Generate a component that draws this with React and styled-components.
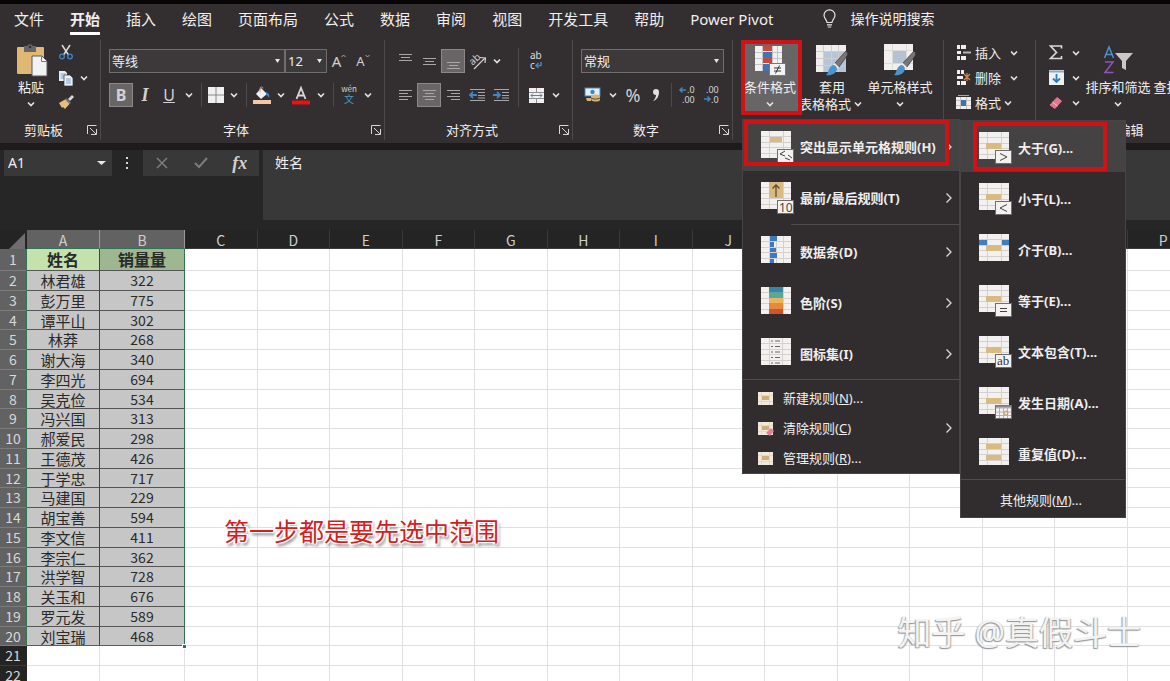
import React from 'react'
import styled, { createGlobalStyle, css } from 'styled-components'

const colors = {
    ribbon: '#332f30',
    menu: '#312d2e',
    menuHover: '#444243',
    bar: '#262626',
    field: '#383838',
    line: '#4c494a',
    text: '#f0eeee',
    icon: '#d2d0d0',
    blue: '#3f86c4',
    tan: '#d9ba80',
    red: '#cf1216',
    green: '#2e7554',
    headActive: '#626262',
}

const uiFont = '"Noto Sans", "Noto Sans CJK SC", sans-serif'

const GlobalStyle = createGlobalStyle`
    * { box-sizing: border-box; }
    body { margin: 0; background: #fff; font-family: ${uiFont}; }
    button, input, select { font: inherit; color: inherit; }
    svg { overflow: visible; }
`

/* ---------- layout ---------- */

const StPage = styled.div`
    display: flex;
    flex-direction: column;
    height: 100vh;
    overflow: hidden;
    color: ${colors.text};
    font-size: 13px;
    line-height: 18px;
`

const StTitleStrip = styled.div`
    flex: none;
    height: 4px;
    background: #060404;
`

const StTabs = styled.nav`
    display: flex;
    flex: none;
    align-items: center;
    gap: 26px;
    height: 32px;
    padding: 0 14px;
    background: ${colors.ribbon};
    white-space: nowrap;
`

const StTab = styled.button`
    display: flex;
    align-items: center;
    height: 30px;
    padding: 0;
    border: 0;
    border-bottom: 3px solid ${({ $active }) => ($active ? '#fff' : 'transparent')};
    background: none;
    font-size: 15px;
    font-weight: ${({ $active }) => ($active ? 700 : 400)};
`

const StSearch = styled(StTab)`
    gap: 14px;
    margin-left: 24px;
    font-size: 14px;
`

const StRibbon = styled.div`
    display: flex;
    flex: none;
    height: 107px;
    padding: 4px 0 3px;
    background: ${colors.ribbon};
`

const StGroup = styled.section`
    display: flex;
    flex: none;
    flex-direction: column;
    justify-content: space-between;
    border-right: 1px solid ${colors.line};
`

const StGroupBody = styled.div`
    display: flex;
    gap: ${({ $gap }) => $gap || 0}px;
    height: 75px;
    padding: 0 8px;
`

const StGroupFoot = styled.div`
    display: flex;
    align-items: center;
    height: 20px;
    padding-right: 3px;
    text-align: center;
`

const StGroupName = styled.span`
    flex: 1;
`

const StLauncher = styled.button`
    display: flex;
    padding: 0;
    border: 0;
    background: none;
`

const StRows = styled.div`
    display: flex;
    flex-direction: column;
    gap: 10px;
    padding-top: 9px;
`

const StStack = styled.div`
    display: grid;
    grid-template-rows: repeat(3, 25px);
    justify-items: start;
`

const StRow = styled.div`
    display: flex;
    align-items: center;
`

const StTool = styled.button`
    display: flex;
    align-items: center;
    justify-content: center;
    width: ${({ $w }) => $w || 24}px;
    height: 24px;
    padding: 0;
    border: 1px solid ${({ $active }) => ($active ? '#8a8888' : 'transparent')};
    background: ${({ $active }) => ($active ? '#686566' : 'none')};
    color: ${colors.icon};
    font-size: ${({ $size }) => $size || 16}px;
    font-weight: ${({ $bold }) => ($bold ? 700 : 400)};
`

const StSerifTool = styled(StTool)`
    font-family: "Liberation Serif", serif;
    font-size: 18px;
    font-style: italic;
    font-weight: 700;
`

const StDivider = styled.span`
    align-self: stretch;
    width: 1px;
    margin: ${({ $tall }) => ($tall ? '8px 4px' : '0 4px')};
    background: ${colors.line};
`

const StWideTool = styled.button`
    display: flex;
    align-items: center;
    padding: 0;
    border: 0;
    background: none;
    white-space: nowrap;
`

const StWideIcon = styled.span`
    display: flex;
    justify-content: center;
    width: 22px;
    margin-right: 1px;
`

const StBigTool = styled.button`
    display: flex;
    flex-direction: column;
    align-items: center;
    width: ${({ $w }) => $w}px;
    height: 75px;
    padding: 4px 0 0;
    border: 0;
    background: ${({ $active }) => ($active ? '#686566' : 'none')};
    white-space: nowrap;

    svg { flex: none; }
`

const StBigLabel = styled.span`
    margin-top: 2px;
`

const StLabelLine = styled.span`
    display: flex;
    align-items: center;
    height: 15px;
`

const redFrame = css`
    &::after {
        content: '';
        position: absolute;
        inset: ${({ $frame }) => $frame};
        border: 4px solid ${colors.red};
        pointer-events: none;
    }
`

const StAnchor = styled.div`
    position: relative;
    z-index: 2;
    ${redFrame}
`

const StSelectWrap = styled.label`
    position: relative;
    display: flex;
    width: ${({ $w }) => $w}px;

    svg {
        position: absolute;
        right: 5px;
        top: 10px;
        pointer-events: none;
    }
`

const StSelect = styled.select`
    appearance: none;
    width: 100%;
    height: 24px;
    padding: 0 2px;
    border: 1px solid #706e6e;
    border-radius: 0;
    background: #3b3939;
    font-size: 13px;
`

/* ---------- menus ---------- */

const StMenu = styled.div`
    position: absolute;
    left: 1px;
    top: 79px;
    width: 218px;
    border: 1px solid #474445;
    background: ${colors.menu};
`

const StSubMenu = styled(StMenu)`
    left: 217px;
    top: 0;
    width: 166px;
`

const StMenuItem = styled.button`
    position: relative;
    display: flex;
    align-items: center;
    gap: 5px;
    width: 100%;
    height: 51px;
    padding: 3px 6px 0 18px;
    border: 0;
    background: ${({ $active }) => ($active ? colors.menuHover : 'none')};
    font-weight: 700;
    text-align: left;
    white-space: nowrap;
    ${({ $frame }) => $frame && redFrame}
`

const StSmallItem = styled(StMenuItem)`
    gap: 9px;
    height: 30px;
    padding: 0 6px 0 14px;
    font-weight: 400;
`

const StOtherItem = styled(StSmallItem)`
    height: 34px;
    padding-left: 39px;
`

const StItemText = styled.span`
    flex: 1;
`

const StMenuLine = styled.hr`
    height: 1px;
    margin: ${({ $inset }) => ($inset ? '2px 0 0 48px' : '1px 0 3px')};
    border: 0;
    background: #4f4c4d;
`

/* ---------- formula bar ---------- */

const StFormulaBar = styled.div`
    display: flex;
    flex: none;
    align-items: flex-start;
    height: 87px;
    padding: 0 0 0 4px;
    border-top: 7px solid #1f1b1c;
    background: ${colors.bar};
`

const StNameBox = styled.div`
    display: flex;
    align-items: center;
    width: 108px;
    height: 26px;
    padding-right: 6px;
    background: ${colors.field};
`

const StNameInput = styled.input`
    flex: 1;
    width: 0;
    padding: 0 4px;
    border: 0;
    background: none;
    font-size: 14px;
`

const StDots = styled.span`
    display: flex;
    align-items: center;
    justify-content: center;
    width: 31px;
    height: 26px;
`

const StFxBox = styled.div`
    display: flex;
    align-items: center;
    justify-content: space-around;
    width: 116px;
    height: 26px;
    margin-right: 4px;
    background: ${colors.field};
`

const StFormula = styled.input`
    flex: 1;
    height: 70px;
    padding: 0 12px 46px;
    border: 0;
    background: ${colors.field};
    font-size: 14px;
`

/* ---------- sheet ---------- */

const StSheet = styled.main`
    position: relative;
    flex: 1;
    min-height: 0;
    overflow: hidden;
    background: #fff;
`

const StTable = styled.table`
    width: calc(100% + 30px);
    table-layout: fixed;
    border-collapse: separate;
    border-spacing: 0;
    color: #2a2a2a;
    text-align: center;
    line-height: 17px;
`

const StCol = styled.col`
    width: ${({ $w }) => $w}px;
`

const StLine = styled.tr`
    height: ${({ $h }) => $h}px;
`

const StColHead = styled.th`
    padding: 2px 0 0;
    border-right: 1px solid ${({ $active }) => ($active ? '#9a9a9a' : '#3a3a3a')};
    border-bottom: 1px solid ${({ $active }) => ($active ? colors.green : '#3a3a3a')};
    background: ${({ $active }) => ($active ? colors.headActive : '#242424')};
    color: #cfcfcf;
    font: 14px/16px "Noto Sans CJK SC", sans-serif;
`

const StCorner = styled.th`
    padding: 0;
    background: #242424;
    vertical-align: bottom;

    svg { display: block; margin-left: 9px; }
`

const StRowHead = styled.th`
    padding: 0;
    border-right: 1px solid ${({ $active }) => ($active ? colors.green : '#242424')};
    border-bottom: 1px solid ${({ $active }) => ($active ? '#7c7c7c' : '#3a3a3a')};
    background: ${({ $active }) => ($active ? colors.headActive : '#242424')};
    color: #d8d8d8;
    font: 14px/17px "Noto Sans CJK SC", sans-serif;
`

const StCell = styled.td`
    padding: 0;
    border-right: 1px solid #e0e0e0;
    border-bottom: 1px solid #e0e0e0;
`

const StDataCell = styled(StCell)`
    border-right-color: ${({ $edge }) => ($edge ? colors.green : '#444')};
    border-bottom-color: ${({ $last }) => ($last ? colors.green : '#555')};
    background: #c6c6c6;
    font: ${({ $edge }) => ($edge ? 14 : 15)}px/17px "Noto Sans CJK SC", sans-serif;
`

const StHeadCell = styled(StDataCell)`
    background: ${({ $edge }) => ($edge ? '#9fb790' : '#c5e2ae')};
    font-size: 16px;
    font-weight: 700;
`

const StFillHandle = styled.span`
    position: absolute;
    left: 182px;
    top: 414px;
    width: 5px;
    height: 5px;
    border: 1px solid #fff;
    background: ${colors.green};
`

const StNote = styled.p`
    position: absolute;
    left: 224px;
    top: 282px;
    margin: 0;
    color: #d3201f;
    font: 25px/36px "Noto Sans CJK SC", sans-serif;
    text-shadow: -2px -1px 1px #fff, 2px -1px 1px #fff, -2px 1px 1px #fff, 1px 1px 0 #fff, 2px 3px 3px #777;
`

const StWatermark = styled.p`
    position: absolute;
    right: 29px;
    top: 380px;
    margin: 0;
    color: #f3f3f3;
    font: 34px/44px ${uiFont};
    text-shadow: -1px 1px 1px #999, 1px 1px 1px #aaa;
`

/* ---------- icons ---------- */

const Caret = ({ w = 16 }) => (
    <svg width={w} height="8" viewBox={`${-w / 2} -4 ${w} 8`} fill="none">
        <path d="M-3-1.5 0 1.5 3-1.5" stroke="#e4e2e2" strokeWidth="1.6" />
    </svg>
)

const CaretTool = ({ label }) => (
    <StTool $w={16} aria-label={label}><Caret /></StTool>
)

const Triangle = ({ size = 5 }) => (
    <svg width={size} height="4" viewBox="0 0 10 6" preserveAspectRatio="none"><path d="M0 0h10L5 6z" fill="#e8e6e6" /></svg>
)

const Chevron = () => (
    <svg width="8" height="12" viewBox="0 0 8 12" fill="none"><path d="m1.500 1.500 4.500 4.500-4.500 4.500" stroke="#dddbdb" strokeWidth="1.300" /></svg>
)

const LauncherIcon = () => (
    <svg width="10" height="10" viewBox="0 0 10 10" fill="none" stroke="#d8d6d6">
        <path d="M.5 9V.5H9.500M3 3l6 6M9.500 4v5.500H4" />
    </svg>
)

const BulbIcon = () => (
    <svg width="13" height="19" viewBox="0 0 13 19" fill="none" stroke="#e8e6e6" strokeWidth="1.200">
        <path d="M4 13.500c0-2.500-3-4-3-7.200a5.500 5.500 0 0 1 11 0c0 3.200-3 4.700-3 7.200zM4 15.800h5M4.800 18h3.400" />
    </svg>
)

const PasteIcon = () => (
    <svg width="32" height="32" viewBox="0 0 32 32">
        <rect x="2" y="3" width="27" height="27" rx="1" fill="#e0b873" />
        <path d="M9 2h3a3.500 3.500 0 0 1 6 0h3v6H9z" fill="#67656b" />
        <circle cx="15" cy="3" r="1.300" fill="#332f30" />
        <path d="M17 12h10l5 5v15H17z" fill="#f1f2f4" stroke="#59595c" />
        <path d="M26.500 12.500v5H32" fill="none" stroke="#77787c" />
    </svg>
)

const CutIcon = () => (
    <svg width="16" height="16" viewBox="0 0 16 16" fill="none">
        <path d="m4 1 6.500 10M12 1 5.500 11" stroke="#dcdadb" strokeWidth="1.500" />
        <circle cx="4" cy="12.500" r="2.300" stroke={colors.blue} strokeWidth="1.300" />
        <circle cx="12" cy="12.500" r="2.300" stroke={colors.blue} strokeWidth="1.300" />
    </svg>
)

const CopyIcon = () => (
    <svg width="16" height="16" viewBox="0 0 16 16">
        <path d="M1 1h6l2 2v8H1z" fill="#e9edf2" />
        <path d="M2.500 4h5M2.500 6h5M2.500 8h4" stroke="#5b93c8" strokeWidth=".8" />
        <path d="M6 5h6l3 3v8H6z" fill="#edf1f5" stroke="#332f30" strokeWidth=".7" />
        <path d="M8 9h5M8 11h5M8 13h5" stroke="#5b93c8" strokeWidth=".8" />
    </svg>
)

const BrushIcon = () => (
    <svg width="15" height="14" viewBox="0 0 15 14">
        <path d="m9 4 4-4 2 2-4 4z" fill="#d9d7d7" />
        <path d="m7 3 5 5-2 1-4-4z" fill="#817e7e" />
        <path d="M6 4.500 10.500 9 6 14 4 12l-1 1L0 8z" fill="#e3be7d" />
    </svg>
)

const FontSizeMark = ({ down }) => (
    <svg width="5" height="14" viewBox="0 0 5 14" fill="none">
        <path d={down ? 'M.5 1 2.500 3l2-2' : 'M.5 3l2-2 2 2'} stroke="#a9a7a7" />
    </svg>
)

const BordersIcon = () => (
    <svg width="16" height="16" viewBox="0 0 16 16">
        <rect width="16" height="16" fill="#f1efef" />
        <path d="M8 0v16M0 8h16" stroke="#8b8889" />
    </svg>
)

const FillIcon = () => (
    <svg width="18" height="18" viewBox="0 0 18 18">
        <path d="m8 2 6 6-6 5-5-5z" fill="#f0eeee" />
        <path d="M7 6V2.500a1.500 1.500 0 0 1 3 0" fill="none" stroke="#a4a2a2" />
        <path d="M13 6c3 1 4 3 3 6-1-2-2-3-3-3z" fill={colors.blue} />
        <rect y="14" width="18" height="4" fill="#f4c6a5" />
    </svg>
)

const FontColorIcon = () => (
    <svg width="18" height="19" viewBox="0 0 18 19">
        <path d="M4.500 13 9 2l4.500 11M6 9.500h6" fill="none" stroke="#d8d6d6" strokeWidth="1.800" />
        <rect y="14.500" width="18" height="4" fill="#ee1111" />
    </svg>
)

const PhoneticIcon = () => (
    <svg width="16" height="18" viewBox="0 0 16 18" fontFamily='"Noto Sans CJK SC", sans-serif' textAnchor="middle">
        <text x="8" y="6" fontSize="8" fill="#d8d6d6">wén</text>
        <text x="8" y="17" fontSize="10" fill="#4b9ab8">文</text>
    </svg>
)

const linePaths = {
    left: 'M1 3h13M1 6h9M1 9h13M1 12h9',
    center: 'M1 3h13M3 6h9M1 9h13M3 12h9',
    right: 'M1 3h13M5 6h9M1 9h13M5 12h9',
    top: 'M1 1h13M3 4h9M1 7h13',
    middle: 'M1 5h13M3 8h9M1 11h13',
    bottom: 'M1 9h13M3 12h9M1 15h13',
}

const LinesIcon = ({ type }) => (
    <svg width="15" height="16" viewBox="0 -.5 15 16"><path d={linePaths[type]} stroke="#a8a6a6" /></svg>
)

const IndentIcon = ({ flip }) => (
    <svg width="17" height="14" viewBox="0 0 17 14" fill="none">
        <path d="M1 1.500h15M9 4.500h7M9 7.500h7M1 12.500h15M9 10h7" stroke="#a8a6a6" />
        <path d={flip ? 'M0 7h7M4 4l3 3-3 3' : 'M8 7H1M4 4 1 7l3 3'} stroke={colors.blue} strokeWidth="1.800" />
    </svg>
)

const OrientationIcon = () => (
    <svg width="18" height="18" viewBox="0 0 18 18" fill="none">
        <text x="2" y="11" fontSize="10" fill="#d2d0d0" transform="rotate(-42 7 9)">ab</text>
        <path d="M6 17 17 6M12 5.500l5.500.5-.5 5" stroke="#d2d0d0" strokeWidth="1.200" />
    </svg>
)

const WrapIcon = () => (
    <svg width="16" height="18" viewBox="0 0 16 18" fill="none">
        <text x="2" y="7" fontSize="10" fill="#e0dede">ab</text>
        <text x="2" y="17" fontSize="10" fill="#e0dede">c</text>
        <path d="M13 10v3.500H8M10.500 11 8 13.500l2.500 2.500" stroke={colors.blue} strokeWidth="1.500" />
    </svg>
)

const MergeIcon = () => (
    <svg width="15" height="15" viewBox="0 0 15 15" fill="none">
        <rect width="15" height="15" fill="#f1efef" />
        <path d="M0 4.500h15M0 10.500h15M7.500 0v4.500M7.500 10.500V15" stroke="#8f8c8d" />
        <path d="M2 7.500h11M4 5.500l-2 2 2 2M11 5.500l2 2-2 2" stroke={colors.blue} />
    </svg>
)

const CurrencyIcon = () => (
    <svg width="16" height="16" viewBox="0 0 16 16">
        <rect y="1" width="15" height="8" fill="#e6eff6" stroke={colors.blue} />
        <circle cx="7.500" cy="5" r="2.200" fill={colors.blue} />
        <path d="M6 9c2-2 8-2 9 0v4c-1 2-7 2-9 0z" fill="#d8b377" />
        <path d="M6 11c2 1.500 7 1.500 9 0M2 13c2 1 3 1 5 0" fill="none" stroke="#5f4a2c" />
        <path d="M1 11h5v3H2z" fill="#d8b377" />
    </svg>
)

const CommaIcon = () => (
    <svg width="8" height="13" viewBox="0 0 8 13">
        <path d="M4 0a3 3 0 1 0 0 6c0 2-1 4-3 6 4-1 6-5 6-9 0-2-1-3-3-3z" fill="#e0dede" />
    </svg>
)

const DecimalIcon = ({ more }) => (
    <svg width="18" height="18" viewBox="0 0 18 18" fill="none">
        <text x={more ? 8 : 3} y="7" fontSize="9" fill="#d8d6d6">{more ? '.0' : '.00'}</text>
        <text x={more ? 3 : 8} y="17" fontSize="9" fill="#d8d6d6">{more ? '.00' : '.0'}</text>
        <path d={more ? 'M7 4H1M3.500 1.500 1 4l2.500 2.500' : 'M1 13h6M4.500 10.500 7 13l-2.500 2.500'} stroke={colors.blue} strokeWidth="1.500" />
    </svg>
)

const CondFormatIcon = () => (
    <svg width="32" height="32" viewBox="0 0 32 32">
        <rect x="1" y="2" width="27" height="25" fill="#f2f0f0" />
        <path d="M1 8.500h27M1 14.500h27M1 20.500h27M8.500 2v25M18.500 2v25M23.500 2v25" stroke="#c6c4c4" />
        <path d="M9 2h9v5H9zM9 14h9v5H9z" fill="#c8483d" />
        <path d="M9 8h9v6H9zM9 20h6v7H9z" fill="#3f74b5" />
        <rect x="15.500" y="19.500" width="16" height="12" fill="#f4f3f3" stroke="#777" />
        <path d="M20 24h7M20 27h7M25.500 21.500l-4 8" stroke="#333" />
    </svg>
)

const StyleBrush = () => (
    <>
        <path d="M31 7c2 1 2 3 1 5l-8 11-4-4z" fill="#777576" stroke="#332f30" strokeWidth=".7" />
        <path d="m20 19 4 4-2 2-4-4z" fill="#e9e7e7" />
        <path d="M18 21c2 0 4 2 4 4-1 5-6 7-11 6 3-2 2-8 7-10z" fill="#4c94cc" />
    </>
)

const TableFormatIcon = () => (
    <svg width="34" height="32" viewBox="0 0 34 32">
        <rect x="1" y="1" width="30" height="27" fill="#efeeec" />
        <rect x="9" y="7" width="22" height="21" fill="#b6c6d9" />
        <path d="M1 7.500h30M1 14.500h30M1 21.500h30M8.500 1v27M16.500 1v27M23.500 1v27" stroke="#cfcecb" />
        <StyleBrush />
    </svg>
)

const CellStyleIcon = () => (
    <svg width="34" height="32" viewBox="0 0 34 32">
        <rect x="1" width="29" height="26" fill="#f1f0ee" />
        <path d="M1 6.500h29M1 19.500h29M9.500 0v26M23.500 0v26" stroke="#dddbd9" />
        <rect x="10" y="7" width="13" height="12" fill="#b4c2d2" />
        <StyleBrush />
    </svg>
)

const InsertIcon = () => (
    <svg width="15" height="15" viewBox="0 0 15 15" fill="none">
        <path d="M1 0h9v4H1zM1 11h9v4H1zM1 6h4v3H1z" fill="#efeded" />
        <path d="M4.500 0v4M4.500 11v4" stroke="#332f30" />
        <path d="M7 7.500h8" stroke="#b5b3b3" strokeWidth="2" />
    </svg>
)

const DeleteIcon = () => (
    <svg width="15" height="15" viewBox="0 0 15 15" fill="none">
        <path d="M1 0h7v4H1zM1 11h9v4H1zM1 6h6v3H1z" fill="#efeded" />
        <path d="M4.500 0v4M4.500 11v4" stroke="#332f30" />
        <path d="m8 4 6 6M14 4l-6 6M11 3v8" stroke="#d98454" strokeWidth="1.200" />
    </svg>
)

const FormatIcon = () => (
    <svg width="15" height="15" viewBox="0 0 15 15" fill="none">
        <path d="M0 2h15v12H0z" fill="#efeded" />
        <path d="M0 5.500h15M0 10.500h15M4.500 2v12M10.500 2v12" stroke="#c2c0c0" />
        <path d="M5 5h5v6H5z" fill="#3b74a8" />
        <path d="M2 .5h11" stroke="#7fb0d8" />
    </svg>
)

const SumIcon = () => (
    <svg width="14" height="15" viewBox="0 0 14 15" fill="none"><path d="M12.500 3.500V1H1.500l6 6.500-6 6h11V11" stroke="#dcdada" strokeWidth="1.600" /></svg>
)

const FillDownIcon = () => (
    <svg width="15" height="15" viewBox="0 0 15 15" fill="none">
        <path d="M0 0h15v15H0z" fill="#eef1f4" />
        <path d="M0 1.500h15" stroke="#8fa7bd" strokeWidth="2" />
        <path d="M7.500 4v8M4 8.500l3.500 3.500L11 8.500" stroke="#3279b8" strokeWidth="1.800" />
    </svg>
)

const EraserIcon = () => (
    <svg width="14" height="14" viewBox="0 0 14 14">
        <path d="M8 1.500 12.500 5 6 12.500 1 9z" fill="#e2768f" stroke="#e2768f" strokeLinejoin="round" />
        <path d="m3.500 6 5 4" stroke="#f4c0cb" />
    </svg>
)

const SortIcon = () => (
    <svg width="32" height="32" viewBox="0 0 32 32" fill="none">
        <path d="M2.500 14 7 3l4.500 11M4 10.500h6" stroke="#4a92d0" strokeWidth="1.500" />
        <path d="M3 18h8L3 28.500h8.500" stroke="#8e57b4" strokeWidth="1.500" />
        <path d="M13 9h18l-7 8v9l-4-2v-7z" fill="#c9c7c7" />
    </svg>
)

/* cells are [x, y, width, height, fill] inside a 30x27 sheet */
const SheetIcon = ({ cells = [], cols = [8, 22], badge, children }) => (
    <svg width="34" height="32" viewBox="0 0 34 32" fill="none" fontWeight="400">
        <rect width="30" height="27" fill="#f3f1ef" />
        <path d="M0 5.500h30M0 11.500h30M0 16.500h30M0 22.500h30" stroke="#d3d0ce" />
        {cols.map((x) => <path key={x} d={`M${x}.5 0v27`} stroke="#d3d0ce" />)}
        {cells.map(([x, y, w, h, fill]) => <rect key={`${x}-${y}`} x={x} y={y} width={w} height={h} fill={fill} />)}
        {badge && <rect x="16.500" y="18.500" width="16" height="13" fill="#f3f2f1" stroke="#6f6d6d" />}
        {children}
    </svg>
)

const middleCell = [[7, 11, 15, 6, colors.tan]]

const SmallSheetIcon = ({ eraser }) => (
    <svg width="17" height="15" viewBox="0 0 17 15">
        <rect x="1" y="1" width="15" height="13" fill="#f0e9dc" />
        <path d="M1 4.500h15M1 10.500h15M4.500 1v13M12.500 1v13" stroke="#dfd9cf" />
        <rect x="5" y="5" width="7" height="4" fill="#cfae76" />
        {eraser && <path d="m14 7 3 3-4 5-4-3z" fill="#df8094" />}
    </svg>
)

const menuItems = [
    {
        text: '突出显示单元格规则(H)', active: true, frame: '0 10px 5px 1px',
        icon: <SheetIcon badge cells={[[9, 6, 12, 5, colors.tan]]}><path d="m24 20-5 3 5 2M24 27l5 2M27 24l4 3" stroke="#444" /></SheetIcon>,
    },
    {
        text: '最前/最后规则(T)',
        icon: <SheetIcon badge cells={[[8, 0, 14, 16, colors.tan]]}><path d="M15 15V3M11.500 6.500 15 3l3.500 3.500" stroke="#604a33" strokeWidth="1.300" /><text x="18" y="30" fontSize="12" fill="#444">10</text></SheetIcon>,
    },
    { line: true },
    {
        text: '数据条(D)',
        icon: <SheetIcon cols={[8, 15, 22]} cells={[[9, 0, 7, 5, '#3d78c0'], [9, 6, 4, 5, '#3d78c0'], [9, 12, 6, 4, '#3d78c0'], [9, 17, 7, 5, '#3d78c0'], [9, 23, 4, 4, '#3d78c0']]} />,
    },
    {
        text: '色阶(S)',
        icon: <SheetIcon cells={[[8, 0, 14, 5, '#3a83a8'], [8, 5, 14, 6, '#56a99a'], [8, 11, 14, 5, '#e9b45a'], [8, 16, 14, 6, '#e58a3b'], [8, 22, 14, 5, '#cf5430']]} />,
    },
    {
        text: '图标集(I)',
        icon: <SheetIcon cols={[8, 21]}><path d="M14 3h5M14 8.500h5M14 14h5M14 19.500h5M14 25h5M10 3h2M10 8.500h2M10 14h2M10 19.500h2M10 25h2" stroke="#666" /></SheetIcon>,
    },
]

const subItems = [
    { text: '大于(G)...', active: true, frame: '1px 18px 1px 12px', icon: <SheetIcon badge cells={middleCell}><path d="m21 21.500 7 3.500-7 3.500" stroke="#444" /></SheetIcon> },
    { text: '小于(L)...', icon: <SheetIcon badge cells={middleCell}><path d="m28 21.500-7 3.500 7 3.500" stroke="#444" /></SheetIcon> },
    { text: '介于(B)...', icon: <SheetIcon cells={[[0, 6, 8, 5, '#3f7fbe'], [23, 6, 7, 5, '#3f7fbe'], ...middleCell]} /> },
    { text: '等于(E)...', icon: <SheetIcon badge cells={middleCell}><path d="M21 23.500h7M21 26.500h7" stroke="#444" /></SheetIcon> },
    { text: '文本包含(T)...', icon: <SheetIcon badge cells={middleCell}><text x="18" y="29" fontSize="13" fontFamily='"Liberation Serif", serif' fill="#333">ab</text></SheetIcon> },
    { text: '发生日期(A)...', icon: <SheetIcon badge cells={middleCell}><path d="M17 21h15M17 25h15M17 28.500h15M20.500 21v10M24.500 21v10M28.500 21v10" stroke="#b5b3b2" /><path d="M17 19.500h15" stroke="#8b8989" strokeWidth="2" /><circle cx="27" cy="26" r="2" stroke="#c79b51" /></SheetIcon> },
    { text: '重复值(D)...', icon: <SheetIcon cells={[[7, 6, 15, 5, colors.tan], [7, 17, 15, 5, colors.tan]]} /> },
]

const smallItems = [
    { text: '新建规则', letter: 'N', tail: ')...' },
    { text: '清除规则', letter: 'C', tail: ')', arrow: true },
    { text: '管理规则', letter: 'R', tail: ')...' },
]

const people = [
    ['林君雄', 322], ['彭万里', 775], ['谭平山', 302], ['林莽', 268], ['谢大海', 340],
    ['李四光', 694], ['吴克俭', 534], ['冯兴国', 313], ['郝爱民', 298], ['王德茂', 426],
    ['于学忠', 717], ['马建国', 229], ['胡宝善', 594], ['李文信', 411], ['李宗仁', 362],
    ['洪学智', 728], ['关玉和', 676], ['罗元发', 589], ['刘宝瑞', 468],
]

const tabs = ['文件', '开始', '插入', '绘图', '页面布局', '公式', '数据', '审阅', '视图', '开发工具', '帮助', 'Power Pivot']
const emptyCols = 'CDEFGHIJKLMNOP'.split('')

/* ---------- parts ---------- */

const Group = ({ name, launcher, gap, children }) => (
    <StGroup>
        <StGroupBody $gap={gap}>{children}</StGroupBody>
        <StGroupFoot>
            <StGroupName>{name}</StGroupName>
            {launcher && <StLauncher aria-label={`${name}设置`}><LauncherIcon /></StLauncher>}
        </StGroupFoot>
    </StGroup>
)

const Dropdown = ({ label, value, w }) => (
    <StSelectWrap $w={w}>
        <StSelect aria-label={label} defaultValue={value}>
            <option>{value}</option>
        </StSelect>
        <Triangle />
    </StSelectWrap>
)

const WideTool = ({ icon, text }) => (
    <StWideTool>
        <StWideIcon>{icon}</StWideIcon>
        {text}
        <Caret w={text === '格式' ? 14 : 26} />
    </StWideTool>
)

const FormatMenu = () => (
    <StMenu>
        {menuItems.map((item, i) => item.line ? <StMenuLine key={i} $inset /> : (
            <StMenuItem key={i} $active={item.active} $frame={item.frame}>
                {item.icon}
                <StItemText>{item.text}</StItemText>
                <Chevron />
            </StMenuItem>
        ))}
        <StMenuLine />
        {smallItems.map(({ text, letter, tail, arrow }) => (
            <StSmallItem key={letter}>
                <SmallSheetIcon eraser={arrow} />
                <StItemText>{text}(<u>{letter}</u>{tail}</StItemText>
                {arrow && <Chevron />}
            </StSmallItem>
        ))}
        <StSubMenu>
            {subItems.map((item) => (
                <StMenuItem key={item.text} $active={item.active} $frame={item.frame}>
                    {item.icon}
                    <StItemText>{item.text}</StItemText>
                </StMenuItem>
            ))}
            <StMenuLine />
            <StOtherItem>
                <StItemText>其他规则(<u>M</u>)...</StItemText>
            </StOtherItem>
        </StSubMenu>
    </StMenu>
)

const Ribbon = () => (
    <StRibbon>
        <Group name="剪贴板" launcher gap={2}>
            <StBigTool $w={46}>
                <PasteIcon />
                <StBigLabel>粘贴</StBigLabel>
                <StLabelLine><Caret /></StLabelLine>
            </StBigTool>
            <StStack>
                <StTool $w={20} aria-label="剪切"><CutIcon /></StTool>
                <StRow>
                    <StTool $w={20} aria-label="复制"><CopyIcon /></StTool>
                    <CaretTool label="复制选项" />
                </StRow>
                <StTool $w={20} aria-label="格式刷"><BrushIcon /></StTool>
            </StStack>
        </Group>

        <Group name="字体" launcher>
            <StRows>
                <StRow>
                    <Dropdown label="字体" value="等线" w={176} />
                    <Dropdown label="字号" value="12" w={42} />
                    <StTool $size={15} aria-label="增大字号">A<FontSizeMark /></StTool>
                    <StTool $size={13} aria-label="减小字号">A<FontSizeMark down /></StTool>
                </StRow>
                <StRow>
                    <StTool $active $bold aria-label="加粗">B</StTool>
                    <StSerifTool aria-label="倾斜">I</StSerifTool>
                    <StTool aria-label="下划线"><u>U</u></StTool>
                    <CaretTool label="下划线选项" />
                    <StDivider />
                    <StTool $w={20} aria-label="边框"><BordersIcon /></StTool>
                    <CaretTool label="边框选项" />
                    <StDivider />
                    <StTool $w={22} aria-label="填充颜色"><FillIcon /></StTool>
                    <CaretTool label="填充选项" />
                    <StTool aria-label="字体颜色"><FontColorIcon /></StTool>
                    <CaretTool label="颜色选项" />
                    <StDivider />
                    <StTool $w={22} aria-label="拼音"><PhoneticIcon /></StTool>
                    <CaretTool label="拼音选项" />
                </StRow>
            </StRows>
        </Group>

        <Group name="对齐方式" launcher gap={1}>
            <StRows>
                <StRow>
                    <StTool aria-label="顶端对齐"><LinesIcon type="top" /></StTool>
                    <StTool aria-label="垂直居中"><LinesIcon type="middle" /></StTool>
                    <StTool $active aria-label="底端对齐"><LinesIcon type="bottom" /></StTool>
                    <StTool aria-label="方向"><OrientationIcon /></StTool>
                    <CaretTool label="方向选项" />
                </StRow>
                <StRow>
                    <StTool aria-label="左对齐"><LinesIcon type="left" /></StTool>
                    <StTool $active aria-label="居中"><LinesIcon type="center" /></StTool>
                    <StTool aria-label="右对齐"><LinesIcon type="right" /></StTool>
                    <StTool aria-label="减少缩进"><IndentIcon /></StTool>
                    <StTool aria-label="增加缩进"><IndentIcon flip /></StTool>
                </StRow>
            </StRows>
            <StDivider $tall />
            <StRows>
                <StTool aria-label="自动换行"><WrapIcon /></StTool>
                <StRow>
                    <StTool aria-label="合并后居中"><MergeIcon /></StTool>
                    <CaretTool label="合并选项" />
                </StRow>
            </StRows>
        </Group>

        <Group name="数字" launcher>
            <StRows>
                <Dropdown label="数字格式" value="常规" w={143} />
                <StRow>
                    <StTool aria-label="会计格式"><CurrencyIcon /></StTool>
                    <CaretTool label="会计选项" />
                    <StTool $size={18}>%</StTool>
                    <StTool $w={22} aria-label="千位分隔"><CommaIcon /></StTool>
                    <StDivider />
                    <StTool aria-label="增加小数位"><DecimalIcon more /></StTool>
                    <StTool aria-label="减少小数位"><DecimalIcon /></StTool>
                </StRow>
            </StRows>
        </Group>

        <Group gap={3}>
            <StAnchor $frame="0 -3px 0 0">
                <StBigTool $w={58} $active>
                    <CondFormatIcon />
                    <StBigLabel>条件格式</StBigLabel>
                    <StLabelLine><Caret /></StLabelLine>
                </StBigTool>
                <FormatMenu />
            </StAnchor>
            <StBigTool $w={60}>
                <TableFormatIcon />
                <StBigLabel>套用</StBigLabel>
                <StLabelLine>表格格式<Caret w={14} /></StLabelLine>
            </StBigTool>
            <StBigTool $w={70}>
                <CellStyleIcon />
                <StBigLabel>单元格样式</StBigLabel>
                <StLabelLine><Caret /></StLabelLine>
            </StBigTool>
        </Group>

        <Group>
            <StStack>
                <WideTool icon={<InsertIcon />} text="插入" />
                <WideTool icon={<DeleteIcon />} text="删除" />
                <WideTool icon={<FormatIcon />} text="格式" />
            </StStack>
        </Group>

        <Group name="编辑">
            <StStack>
                <StRow><StTool aria-label="求和"><SumIcon /></StTool><CaretTool label="求和选项" /></StRow>
                <StRow><StTool aria-label="填充"><FillDownIcon /></StTool><CaretTool label="填充选项" /></StRow>
                <StRow><StTool aria-label="清除"><EraserIcon /></StTool><CaretTool label="清除选项" /></StRow>
            </StStack>
            <StBigTool $w={68}>
                <SortIcon />
                <StBigLabel>排序和筛选</StBigLabel>
                <StLabelLine><Caret /></StLabelLine>
            </StBigTool>
            <StBigTool $w={68}>
                <svg width="32" height="32" />
                <StBigLabel>查找和选择</StBigLabel>
                <StLabelLine><Caret /></StLabelLine>
            </StBigTool>
        </Group>
    </StRibbon>
)

const Sheet = () => {
    const rows = Array.from({ length: 22 }, (_, i) => i + 1)

    // rows average a little under 20px, so every fourth one is a pixel shorter
    const rowHeight = (n) => {
        if (n === 1) return 22
        return n % 4 === 0 ? 19 : 20
    }

    return (
        <StSheet>
            <StTable>
                <colgroup>
                    <StCol $w={27} />
                    <StCol $w={73} />
                    <StCol $w={85} />
                    {emptyCols.map((c) => <col key={c} />)}
                </colgroup>
                <thead>
                    <StLine $h={19}>
                        <StCorner aria-label="全选"><svg width="16" height="16" viewBox="0 0 16 16"><path d="M16 0v16H0z" fill="#6e6e6e" /></svg></StCorner>
                        <StColHead $active>A</StColHead>
                        <StColHead $active>B</StColHead>
                        {emptyCols.map((c) => <StColHead key={c}>{c}</StColHead>)}
                    </StLine>
                </thead>
                <tbody>
                    {rows.map((n) => {
                        const person = people[n - 2]
                        return (
                            <StLine key={n} $h={rowHeight(n)}>
                                <StRowHead $active={n <= 20}>{n}</StRowHead>
                                {n === 1 && <><StHeadCell>姓名</StHeadCell><StHeadCell $edge>销量量</StHeadCell></>}
                                {person && <><StDataCell $last={n === 20}>{person[0]}</StDataCell><StDataCell $edge $last={n === 20}>{person[1]}</StDataCell></>}
                                {n > 20 && <><StCell /><StCell /></>}
                                {emptyCols.map((c) => <StCell key={c} />)}
                            </StLine>
                        )
                    })}
                </tbody>
            </StTable>
            <StFillHandle />
            <StNote>第一步都是要先选中范围</StNote>
            <StWatermark>知乎 @真假斗士</StWatermark>
        </StSheet>
    )
}

const App = () => {
    return (
        <>
            <GlobalStyle />
            <StPage>
                <StTitleStrip />
                <StTabs>
                    {tabs.map((tab) => <StTab key={tab} $active={tab === '开始'}>{tab}</StTab>)}
                    <StSearch><BulbIcon />操作说明搜索</StSearch>
                </StTabs>
                <Ribbon />
                <StFormulaBar>
                    <StNameBox>
                        <StNameInput aria-label="名称框" defaultValue="A1" />
                        <Triangle size={9} />
                    </StNameBox>
                    <StDots><svg width="3" height="13" viewBox="0 0 3 13" fill="#d8d8d8"><path d="M0 0h2v2H0zM0 5h2v2H0zM0 10h2v2H0z" /></svg></StDots>
                    <StFxBox>
                        <StTool aria-label="取消"><svg width="12" height="12" viewBox="0 0 12 12"><path d="m1 1 10 10M11 1 1 11" stroke="#7d7d7d" strokeWidth="1.500" /></svg></StTool>
                        <StTool aria-label="输入"><svg width="14" height="12" viewBox="0 0 14 12" fill="none"><path d="m1 6 4 4 8-9" stroke="#7d7d7d" strokeWidth="2" /></svg></StTool>
                        <StSerifTool aria-label="插入函数">fx</StSerifTool>
                    </StFxBox>
                    <StFormula aria-label="编辑栏" defaultValue="姓名" />
                </StFormulaBar>
                <Sheet />
            </StPage>
        </>
    )
}

export default App
